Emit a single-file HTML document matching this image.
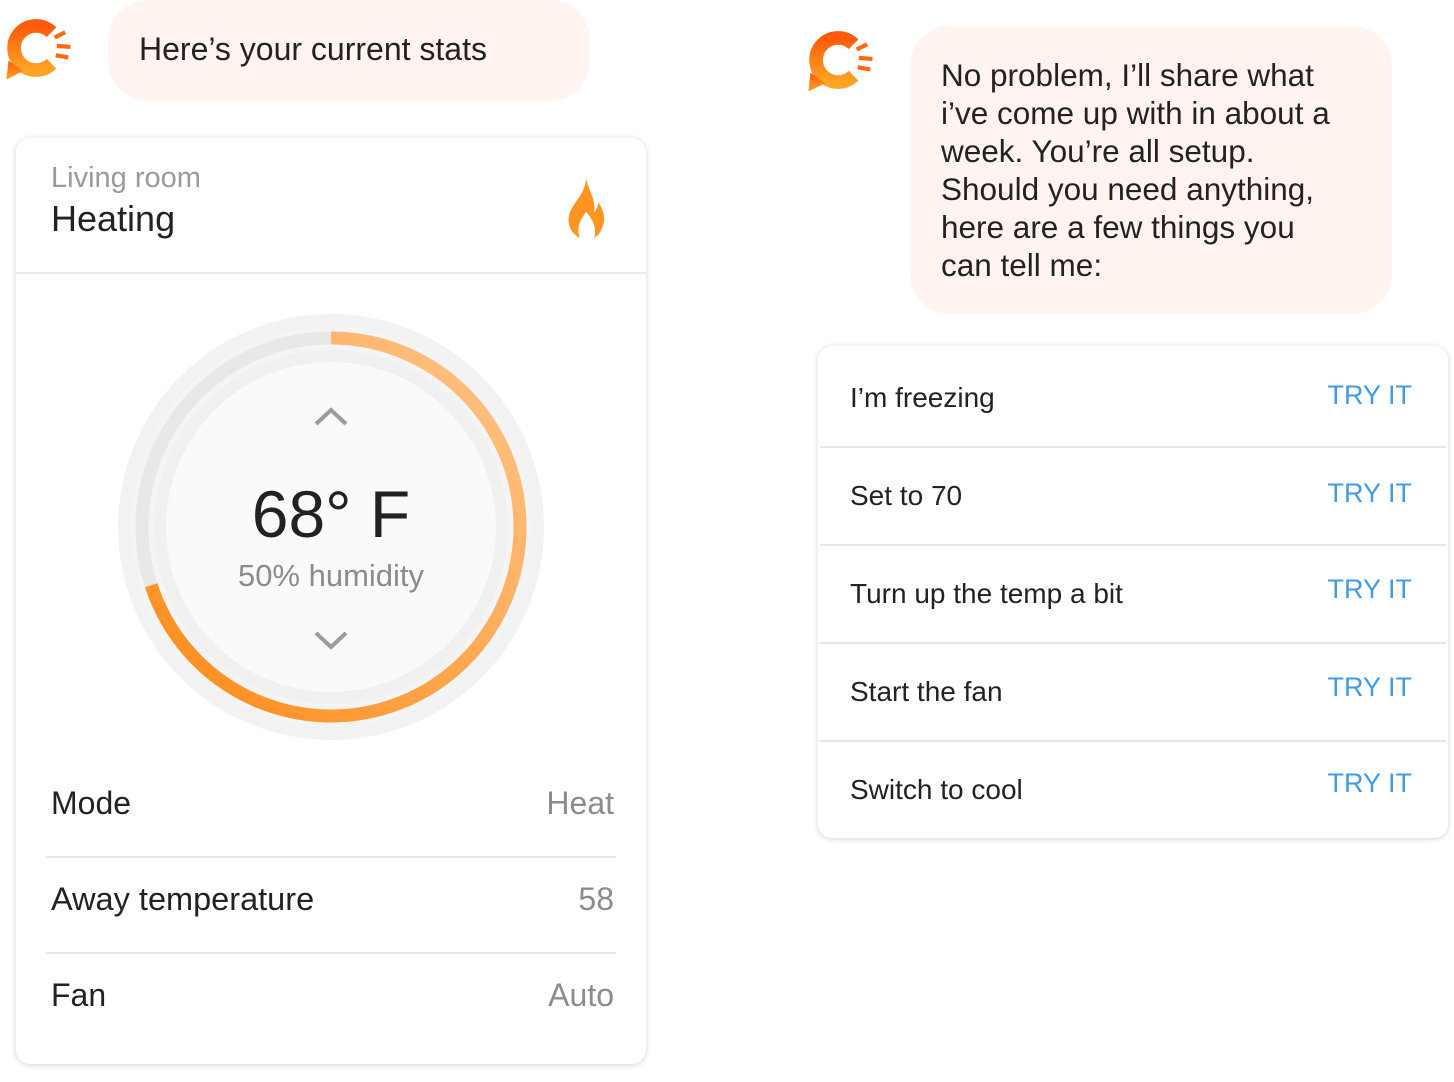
<!DOCTYPE html>
<html><head><meta charset="utf-8"><style>
*{margin:0;padding:0;box-sizing:border-box}
body{width:1454px;height:1082px;background:#fff;font-family:"Liberation Sans",sans-serif;color:#222;position:relative;overflow:hidden}
.abs{position:absolute}
.bubble{background:#fff4ef;border-radius:40px}
.card{background:#fff;border-radius:14px;box-shadow:0 1px 6px rgba(0,0,0,.18)}
.try{color:#3d9be9;font-size:27px;position:absolute;right:36px}
.lbl{font-size:28px;position:absolute;left:32px}
.hr{position:absolute;height:2px;background:#e3e6ea}
</style></head><body>
<svg class="abs" style="left:-2px;top:6px" width="84" height="84" viewBox="0 0 80 80">
<defs><linearGradient id="lg" x1="0" y1="0" x2="0" y2="1"><stop offset="0" stop-color="#ff5a0a"/><stop offset="1" stop-color="#ffa425"/></linearGradient></defs>
<path d="M51 25 A21 21 0 1 0 51 55" fill="none" stroke="url(#lg)" stroke-width="13"/>
<path d="M10 52 L8 70 L24 62 Z" fill="url(#lg)"/>
<g stroke="#ff6a10" stroke-width="4"><line x1="54" y1="30" x2="64" y2="25"/><line x1="56" y1="38" x2="69" y2="39"/><line x1="55" y1="47" x2="67" y2="49"/></g>
</svg>
<div class="abs bubble" style="left:108px;top:0;width:482px;height:101px"></div>
<div class="abs" style="left:139px;top:31px;font-size:32px">Here’s your current stats</div>

<div class="abs card" style="left:16px;top:138px;width:630px;height:926px">
<div class="abs" style="left:35px;top:24px;font-size:29px;color:#9a9a9a">Living room</div>
<div class="abs" style="left:35px;top:60px;font-size:36px;color:#222">Heating</div>
<svg class="abs" style="left:548px;top:38px" width="44" height="64" viewBox="0 0 44 64">
<path d="M22 2 C24 14 32 22 30 36 C33 34 34 30 34 26 C40 34 42 44 38 52 C36 58 32 61 30 62 C33 54 30 44 22 36 C16 44 12 52 16 62 C8 58 3 50 5 40 C7 28 22 18 22 2 Z" fill="#ff9421"/>
</svg>
<div class="hr" style="left:0;right:0;top:134px;background:#e6e8eb"></div>
<svg class="abs" style="left:100px;top:174px" width="430" height="430" viewBox="0 0 430 430">
<defs><linearGradient id="ag" gradientUnits="userSpaceOnUse" x1="330" y1="400" x2="30" y2="60"><stop offset="0" stop-color="#ffc080"/><stop offset="1" stop-color="#ff8c1a"/></linearGradient></defs>
<circle cx="215" cy="215" r="213" fill="#f2f2f2"/>
<circle cx="215" cy="215" r="200" fill="#f4f4f4"/>
<circle cx="215" cy="215" r="189" fill="none" stroke="#e9e8e6" stroke-width="13"/>
<circle cx="215" cy="215" r="189" fill="none" stroke="url(#ag)" stroke-width="13" stroke-dasharray="831 1200" transform="rotate(-90 215 215)"/>
<circle cx="215" cy="215" r="177" fill="#f0f0f0"/>
<circle cx="215" cy="215" r="165" fill="#fafafa"/>
<polyline points="200,112 215,98 230,112" fill="none" stroke="#9a9ca0" stroke-width="4"/>
<polyline points="200,321 215,335 230,321" fill="none" stroke="#9a9ca0" stroke-width="4"/>
</svg>
<div class="abs" style="left:0;width:630px;top:338px;text-align:center;font-size:66px;color:#222">68° F</div>
<div class="abs" style="left:0;width:630px;top:420px;text-align:center;font-size:31px;color:#8c8c8c">50% humidity</div>
<div class="abs" style="left:35px;top:647px;font-size:32px">Mode</div>
<div class="abs" style="right:32px;top:647px;font-size:32px;color:#8c8c8c">Heat</div>
<div class="hr" style="left:30px;right:30px;top:718px"></div>
<div class="abs" style="left:35px;top:743px;font-size:32.5px">Away temperature</div>
<div class="abs" style="right:32px;top:743px;font-size:32px;color:#8c8c8c">58</div>
<div class="hr" style="left:30px;right:30px;top:814px"></div>
<div class="abs" style="left:35px;top:839px;font-size:32px">Fan</div>
<div class="abs" style="right:32px;top:839px;font-size:32px;color:#8c8c8c">Auto</div>
</div>

<svg class="abs" style="left:800px;top:18px" width="84" height="84" viewBox="0 0 80 80">
<path d="M51 25 A21 21 0 1 0 51 55" fill="none" stroke="url(#lg)" stroke-width="13"/>
<path d="M10 52 L8 70 L24 62 Z" fill="url(#lg)"/>
<g stroke="#ff6a10" stroke-width="4"><line x1="54" y1="30" x2="64" y2="25"/><line x1="56" y1="38" x2="69" y2="39"/><line x1="55" y1="47" x2="67" y2="49"/></g>
</svg>
<div class="abs bubble" style="left:910px;top:26px;width:482px;height:288px"></div>
<div class="abs" style="left:941px;top:56px;font-size:31.5px;line-height:38px;white-space:nowrap">No problem, I’ll share what<br>i’ve come up with in about a<br>week. You’re all setup.<br>Should you need anything,<br>here are a few things you<br>can tell me:</div>

<div class="abs card" style="left:818px;top:346px;width:630px;height:492px">
<div class="lbl" style="top:36px">I’m freezing</div><div class="try" style="top:34px">TRY IT</div>
<div class="hr" style="left:2px;right:2px;top:100px"></div>
<div class="lbl" style="top:134px">Set to 70</div><div class="try" style="top:132px">TRY IT</div>
<div class="hr" style="left:2px;right:2px;top:198px"></div>
<div class="lbl" style="top:232px">Turn up the temp a bit</div><div class="try" style="top:228px">TRY IT</div>
<div class="hr" style="left:2px;right:2px;top:296px"></div>
<div class="lbl" style="top:330px">Start the fan</div><div class="try" style="top:326px">TRY IT</div>
<div class="hr" style="left:2px;right:2px;top:394px"></div>
<div class="lbl" style="top:428px">Switch to cool</div><div class="try" style="top:422px">TRY IT</div>
</div>
</body></html>
